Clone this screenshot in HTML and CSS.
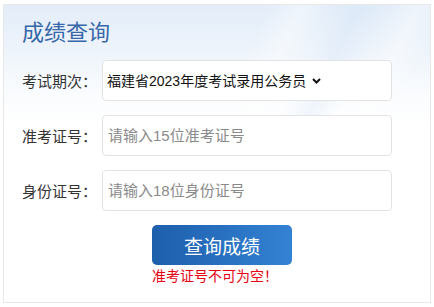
FILE: index.html
```html
<!DOCTYPE html>
<html lang="zh-CN">
<head>
    <meta charset="UTF-8">
    <meta name="viewport" content="width=device-width, initial-scale=1.0">
    <title>成绩查询</title>
    <link rel="stylesheet" href="styles.css">
</head>
<body>
    <div class="query-card">
        <div class="card-bg"></div>
        <h2 class="card-title">成绩查询</h2>
        <form class="query-form" onsubmit="return false">
            <div class="form-row">
                <label class="row-label">考试期次：</label>
                <div class="field select-field">
                    <select class="exam-select">
                        <option>福建省2023年度考试录用公务员</option>
                    </select>
                    <svg class="chevron" width="9" height="6" viewBox="0 0 9 6">
                        <path d="M1 1 L4.5 4.5 L8 1" fill="none" stroke="#111" stroke-width="2"/>
                    </svg>
                </div>
            </div>
            <div class="form-row">
                <label class="row-label">准考证号：</label>
                <input class="field" type="text" placeholder="请输入15位准考证号">
            </div>
            <div class="form-row">
                <label class="row-label">身份证号：</label>
                <input class="field" type="text" placeholder="请输入18位身份证号">
            </div>
            <div class="submit-area">
                <button class="submit-button">查询成绩</button>
                <div class="error-msg">准考证号不可为空！</div>
            </div>
        </form>
    </div>
</body>
</html>
```

FILE: styles.css
```css
body {
    margin: 0;
    background-color: #fff;
    font-family: "Liberation Sans", "Noto Sans CJK SC", sans-serif;
}
.query-card {
    position: relative;
    margin: 4px 3px 0 3px;
    height: 299px;
    border: 1px solid #e8e8e8;
    box-sizing: border-box;
    overflow: hidden;
}
.card-bg {
    position: absolute;
    left: 0;
    top: 0;
    right: 0;
    height: 120px;
    background:
        linear-gradient(115deg, transparent 55%, rgba(255,255,255,0.4) 62%, transparent 68%, rgba(200,220,245,0.25) 74%, transparent 80%, rgba(255,255,255,0.4) 86%, transparent 92%),
        linear-gradient(180deg, #e3edf9 0%, #eef4fb 40%, #fafcfe 75%, #fff 100%);
}
.card-title {
    position: relative;
    margin: 0;
    padding: 13px 0 0 18px;
    height: 42px;
    font-size: 22px;
    line-height: 30px;
    font-weight: normal;
    color: #3767a8;
}
.query-form {
    position: relative;
    display: flex;
    flex-direction: column;
    gap: 14px;
}
.form-row {
    display: flex;
    align-items: center;
}
.row-label {
    width: 80px;
    padding-left: 18px;
    font-size: 15px;
    color: #333;
}
.field {
    width: 290px;
    height: 41px;
    box-sizing: border-box;
    border: 1px solid #e3e3e3;
    border-radius: 4px;
    background: #fff;
    padding: 0 0 0 5px;
    font-size: 15px;
    font-family: inherit;
    color: #333;
    outline: none;
}
.field::placeholder {
    color: #8a8a8a;
}
.select-field {
    display: flex;
    align-items: center;
    gap: 5px;
    padding-left: 4px;
}
.exam-select {
    appearance: none;
    border: none;
    background: transparent;
    padding: 0;
    font-size: 14px;
    font-family: inherit;
    color: #111;
    outline: none;
}
.chevron {
    margin-top: 1px;
}
.submit-area {
    display: flex;
    flex-direction: column;
    align-items: center;
    margin-left: 10px;
}
.submit-button {
    width: 140px;
    height: 40px;
    border: none;
    border-radius: 5px;
    background: linear-gradient(90deg, #1d5fab, #3482d4);
    color: #fff;
    font-size: 19px;
    font-family: inherit;
    cursor: pointer;
}
.error-msg {
    width: 140px;
    margin-top: 2px;
    font-size: 14px;
    line-height: 18px;
    color: #e60012;
}
```
